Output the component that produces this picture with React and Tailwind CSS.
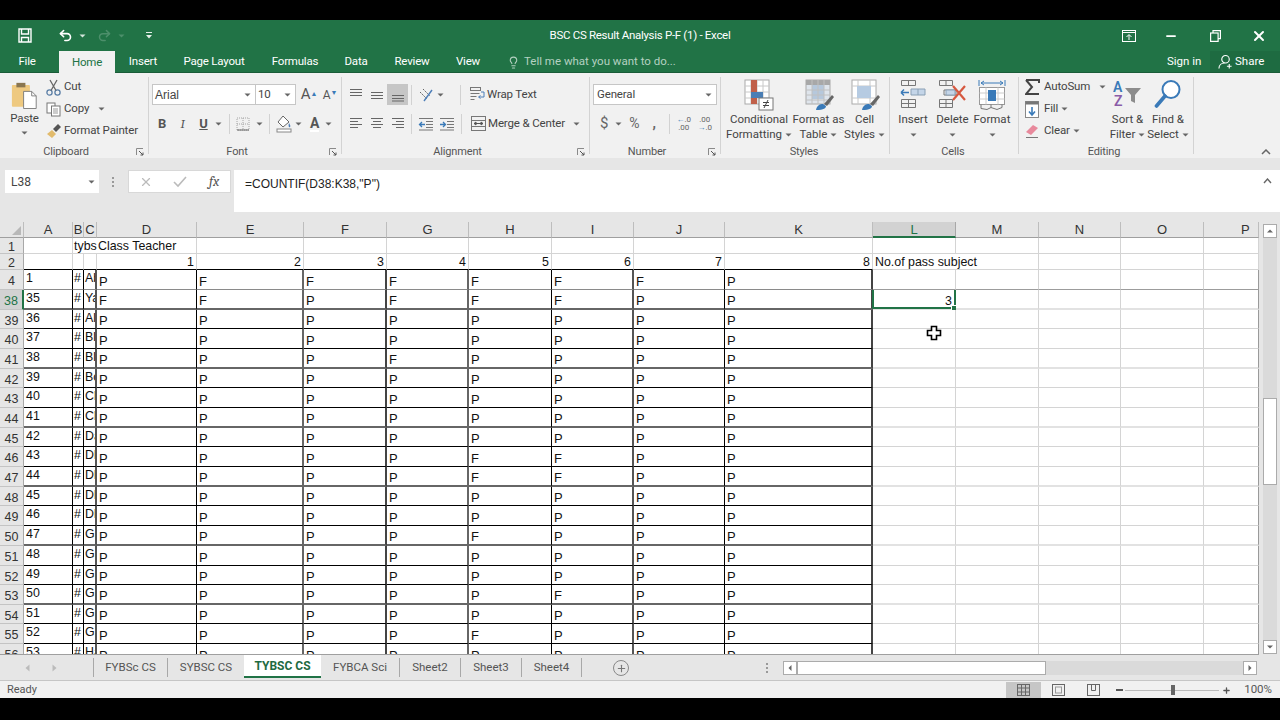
import React from 'react';
import { Undo2, Redo2, Lightbulb, X, Minus, Plus } from 'lucide-react';

const Caret = ({ c = '#666', className = '' }) => (
  <svg width="7" height="4" viewBox="0 0 7 4" className={`shrink-0 ${className}`}><path d="M0.5 0.5h6L3.5 3.5z" fill={c} /></svg>
);
const VSep = ({ className = '' }) => <div className={`w-px h-[20px] bg-[#d2d2d2] shrink-0 ${className}`} />;
const GroupSep = () => <div className="w-px my-[4px] bg-[#d3d3d3] shrink-0" />;
const Launcher = () => (
  <svg width="8" height="8" viewBox="0 0 8 8" className="absolute right-[4px] top-[2px]"><path d="M0.5 7V0.5H7" fill="none" stroke="#8a8a8a" /><path d="M3 3l4 4M7 4.5V7H4.5" fill="none" stroke="#555" /></svg>
);
const Group = ({ w, label, launcher, lp = '', children }) => (
  <div className={`flex flex-col shrink-0 ${w}`}>
    <div className="flex-1 min-h-0">{children}</div>
    <div className={`relative h-[12px] leading-[12px] text-center text-[11px] text-[#555] ${launcher ? 'pr-[16px]' : lp}`}>{label}{launcher && <Launcher />}</div>
  </div>
);

const Lines = ({ rows }) => (
  <svg width="16" height="14" viewBox="0 0 16 14">
    {rows.map(([x1, x2, y], i) => <path key={i} d={`M${x1} ${y}H${x2}`} stroke="#666" strokeWidth="1" />)}
  </svg>
);

const PasteIcon = () => (
  <svg width="27" height="28" viewBox="0 0 30 30">
    <rect x="1" y="4" width="20" height="24" rx="1" fill="#eec980" />
    <rect x="6" y="1.5" width="10" height="5" fill="#8a7650" />
    <path d="M14 11h9l5 5v14H14z" fill="#fff" stroke="#777" />
    <path d="M23 11v5h5" fill="none" stroke="#777" />
  </svg>
);
const Scissors = () => (
  <svg width="15" height="17" viewBox="0 0 15 17" fill="none" stroke="#5a7ea6" strokeWidth="1.3">
    <circle cx="3.5" cy="13.5" r="2.6" /><circle cx="11.5" cy="13.5" r="2.6" />
    <path d="M5 11.5L11 1M10 11.5L4 1" stroke="#666" />
  </svg>
);
const CopyIcon = () => (
  <svg width="15" height="15" viewBox="0 0 15 15" fill="#fff" stroke="#777"><rect x="1" y="1" width="8" height="10" /><rect x="5.5" y="4" width="8.5" height="10" /><path d="M7 7h5M7 9h5M7 11h5" stroke="#999" /></svg>
);
const Painter = () => (
  <svg width="16" height="16" viewBox="0 0 16 16"><path d="M1 11l5-4 4 4-4 4z" fill="#e2bb6c" /><path d="M7 6l5-5 3 3-5 5z" fill="#555" /></svg>
);
const Borders = () => (
  <svg width="14" height="14" viewBox="0 0 14 14" fill="none"><rect x="1" y="1" width="12" height="12" stroke="#a5a5a5" strokeDasharray="1 1" /><path d="M1 7h12M7 1v12" stroke="#a5a5a5" strokeDasharray="1 1" /><path d="M1 13h12" stroke="#666" /></svg>
);
const FillIcon = () => (
  <svg width="16" height="18" viewBox="0 0 16 18" fill="none"><path d="M7 1L2 7l5 5 6-5z" stroke="#666" fill="#fff" /><path d="M13 8c1 2 2 3 1 4s-2-1-1-4z" fill="#4d7eb8" /><rect x="1" y="14" width="14" height="3" fill="#fff" stroke="#888" /></svg>
);
const Orient = () => (
  <svg width="16" height="16" viewBox="0 0 16 16" fill="none"><path d="M2 5l7 7M5 2l7 7" stroke="#666" strokeDasharray="2 1" /><path d="M14 3L6 14" stroke="#4d7eb8" strokeWidth="1.4" /></svg>
);
const WrapIcon = () => (
  <svg width="17" height="17" viewBox="0 0 17 17" fill="none" stroke="#777"><rect x="1.5" y="1.5" width="10" height="3" /><path d="M1.5 7.5h9M1.5 10.5h6M1.5 13.5h4" /><path d="M12 6h3v5h-5M11.5 9.5l-2 1.5 2 1.5" stroke="#4d7eb8" /></svg>
);
const MergeIcon = () => (
  <svg width="17" height="17" viewBox="0 0 17 17" fill="none" stroke="#777"><rect x="1.5" y="1.5" width="14" height="14" /><path d="M1.5 5.5h14M1.5 11.5h14" /><path d="M4 8.5h9M4 8.5l2-1.5v3zM13 8.5l-2-1.5v3z" stroke="#555" /></svg>
);
const Indent = ({ flip }) => (
  <svg width="16" height="14" viewBox="0 0 16 14" fill="none"><path d="M1 1.5h14M8 4.5h7M8 7.5h7M8 10.5h7M1 13h14" stroke="#777" /><path d={flip ? 'M1 7.5h5M4 5l2.5 2.5L4 10' : 'M7 7.5H2M4 5L1.5 7.5 4 10'} stroke="#3a7ab8" strokeWidth="1.3" /></svg>
);
const CondIcon = () => (
  <svg width="30" height="32" viewBox="0 0 30 32">
    <rect x="1" y="1" width="24" height="24" fill="#fff" stroke="#aaa" />
    <path d="M1 7h24M1 13h24M1 19h24M7 1v24M13 1v24M19 1v24" stroke="#c8c8c8" />
    <rect x="7" y="1" width="6" height="6" fill="#c0604a" /><rect x="7" y="7" width="6" height="6" fill="#c0604a" />
    <rect x="7" y="13" width="12" height="6" fill="#4a7eb5" /><rect x="7" y="19" width="6" height="6" fill="#c0604a" />
    <rect x="15" y="19" width="14" height="12" fill="#fff" stroke="#777" />
    <path d="M19 23.5h6M19 26.5h6M24 21l-4 8" stroke="#444" fill="none" />
  </svg>
);
const Brush = () => (
  <g><path d="M20 25l8-9 2 2-7 9z" fill="#666" /><path d="M12 31c1-5 4-6 7-6l3 2c0 2-2 4-10 4z" fill="#3a7ab8" /></g>
);
const TableIcon = () => (
  <svg width="30" height="32" viewBox="0 0 30 32">
    <rect x="2" y="1" width="24" height="24" fill="#dfe5ec" stroke="#aaa" />
    <rect x="2" y="1" width="24" height="5" fill="#a8a8a8" />
    <rect x="8" y="6" width="12" height="14" fill="#b6c8dc" />
    <path d="M2 11h24M2 16h24M2 21h24M8 1v24M14 1v24M20 1v24" stroke="#c0c0c0" />
    <Brush />
  </svg>
);
const CellStyleIcon = () => (
  <svg width="30" height="32" viewBox="0 0 30 32">
    <rect x="2" y="1" width="24" height="24" fill="#fff" stroke="#aaa" />
    <path d="M2 7h24M2 19h24M8 1v24M20 1v24" stroke="#c8c8c8" />
    <rect x="7" y="7" width="14" height="12" fill="#b6cbe2" />
    <Brush />
  </svg>
);
const InsertIcon = () => (
  <svg width="26" height="30" viewBox="0 0 26 30" fill="none">
    <path d="M1.5 1.5h14v5h-14zM8.5 1.5v5M1.5 20.5h14v8h-14zM1.5 24.5h14M8.5 20.5v8" stroke="#777" />
    <path d="M1 13.5h8M1 13.5l3-3M1 13.5l3 3" stroke="#3a7ab8" strokeWidth="1.5" />
    <path d="M11 10h14v6H11z" fill="#c4d5e8" stroke="#8aa0b5" /><path d="M18 10v6" stroke="#8aa0b5" />
  </svg>
);
const DeleteIcon = () => (
  <svg width="30" height="30" viewBox="0 0 30 30" fill="none">
    <path d="M1.5 1.5h13v5h-13zM8 1.5v5M1.5 20.5h13v8h-13zM1.5 24.5h13M8 20.5v8M6 11h12v5H6z" stroke="#777" />
    <rect x="8" y="11" width="9" height="5" fill="#c4d5e8" stroke="#8aa0b5" />
    <path d="M15 7l12 14M27 7L15 21" stroke="#d6583f" strokeWidth="2.2" />
  </svg>
);
const FormatIcon = () => (
  <svg width="28" height="32" viewBox="0 0 28 32" fill="none">
    <path d="M1 1v6M27 1v6M3 4h22M3 4l3-2M3 4l3 2M25 4l-3-2M25 4l-3 2" stroke="#3a7ab8" />
    <rect x="1.5" y="8.5" width="25" height="17" stroke="#999" fill="#fff" />
    <path d="M1.5 14h25M1.5 20h25M8 8.5v17M20 8.5v17" stroke="#ccc" />
    <rect x="10" y="11" width="8" height="11" fill="#3a7ab8" />
    <path d="M3 25.5v4l6 1 4-2M13 25.5v3l6 2 5-2v-3" stroke="#777" />
  </svg>
);
const Sigma = () => (
  <svg width="15" height="16" viewBox="0 0 15 16"><path d="M1 1h13v3M14 15H1l6-7-6-7" fill="none" stroke="#444" strokeWidth="2" /></svg>
);
const FillDown = () => (
  <svg width="14" height="17" viewBox="0 0 14 17"><rect x="0.5" y="0.5" width="13" height="16" fill="#fff" stroke="#888" /><rect x="0.5" y="0.5" width="13" height="3" fill="#777" /><path d="M7 6v8M4 10.5L7 14l3-3.5" fill="none" stroke="#3a7ab8" strokeWidth="1.6" /></svg>
);
const Eraser = () => (
  <svg width="15" height="16" viewBox="0 0 15 16"><path d="M1 9l7-7 5 3-7 7z" fill="#e8899c" /><path d="M1 14.5h12" stroke="#777" /></svg>
);
const SortIcon = () => (
  <svg width="30" height="32" viewBox="0 0 30 32">
    <text x="0" y="13" fontSize="14" fontWeight="600" fill="#3a7ab8" fontFamily="Roboto">A</text>
    <text x="1" y="27" fontSize="14" fontWeight="600" fill="#8a5ca8" fontFamily="Roboto">Z</text>
    <path d="M12 9h16l-6 7v8l-4-2v-6z" fill="#8c8c8c" />
  </svg>
);
const FindIcon = () => (
  <svg width="28" height="30" viewBox="0 0 28 30" fill="none"><circle cx="17" cy="10.5" r="8.5" stroke="#3a7ab8" strokeWidth="2" fill="#fff" /><path d="M11 17L2.5 27" stroke="#3a7ab8" strokeWidth="3.6" strokeLinecap="round" /></svg>
);

const Big = ({ w, icon, l1, l2, caret = true }) => (
  <div className={`flex flex-col items-center shrink-0 tracking-normal ${w}`}>
    <div className="h-[39px] pt-[6px] flex justify-center">{icon}</div>
    <div className="h-[15px] leading-[15px] whitespace-nowrap">{l1}</div>
    <div className="h-[15px] leading-[15px] whitespace-nowrap flex items-center justify-center gap-[3px]">{l2}{caret && <Caret />}</div>
  </div>
);

const Ribbon = () => (
  <div className="h-[85px] flex bg-[#f1f1f1] text-[11.5px] tracking-[-0.15px] text-[#444] shrink-0">
    <Group w="w-[148px]" label="Clipboard" launcher>
      <div className="flex">
        <div className="w-[46px] flex flex-col items-center pt-[8px] pl-[3px]">
          <PasteIcon />
          <div className="h-[15px] leading-[15px] mt-[2px]">Paste</div>
          <Caret className="mt-[5px]" />
        </div>
        <div className="flex flex-col pt-[3px]">
          <div className="h-[22px] flex items-center"><div className="w-[18px]"><Scissors /></div>Cut</div>
          <div className="h-[22px] flex items-center"><div className="w-[18px]"><CopyIcon /></div>Copy<Caret className="ml-[9px]" /></div>
          <div className="h-[21px] flex items-center"><div className="w-[18px]"><Painter /></div>Format Painter</div>
        </div>
      </div>
    </Group>
    <GroupSep />
    <Group w="w-[192px]" label="Font" launcher>
      <div className="pt-[11px] pl-[3px]">
        <div className="flex items-center h-[21px]">
          <div className="w-[104px] h-[21px] bg-white border border-[#c6c6c6] flex items-center justify-between pl-[2px] pr-[4px] [font-family:'Liberation_Sans',sans-serif] text-[12px] tracking-normal">Arial<Caret /></div>
          <div className="w-[40px] h-[21px] bg-white border border-l-0 border-[#c6c6c6] flex items-center justify-between pl-[2px] pr-[4px]">10<Caret /></div>
          <div className="ml-[4px] w-[18px] text-[15px] text-center text-[#555]">A<sup className="text-[7px] text-[#3a7ab8]">▲</sup></div>
          <div className="ml-[3px] w-[18px] text-[12px] text-center text-[#555]">A<sup className="text-[7px] text-[#3a7ab8]">▼</sup></div>
        </div>
        <div className="flex items-center h-[21px] mt-[8px] text-[13px] text-[#555]">
          <div className="w-[20px] text-center font-bold">B</div>
          <div className="w-[21px] text-center italic font-serif">I</div>
          <div className="w-[21px] text-center font-bold underline">U</div>
          <Caret className="ml-[1px]" />
          <VSep className="ml-[7px]" />
          <div className="ml-[6px]"><Borders /></div>
          <Caret className="ml-[6px]" />
          <VSep className="ml-[6px]" />
          <div className="ml-[6px]"><FillIcon /></div>
          <Caret className="ml-[3px]" />
          <div className="ml-[8px] font-bold border-b-2 border-white leading-[14px] text-[14px]">A</div>
          <Caret className="ml-[6px]" />
        </div>
      </div>
    </Group>
    <GroupSep />
    <Group w="w-[247px]" label="Alignment" launcher>
      <div className="pt-[11px] pl-[3px]">
        <div className="flex items-center h-[21px]">
          <div className="w-[21px] flex justify-center"><Lines rows={[[2, 14, 1.5], [2, 14, 4.5], [2, 14, 7.5]]} /></div>
          <div className="w-[21px] flex justify-center"><Lines rows={[[2, 14, 4.5], [2, 14, 7.5], [2, 14, 10.5]]} /></div>
          <div className="w-[21px] h-[21px] bg-[#c6c6c6] flex justify-center items-center"><Lines rows={[[2, 14, 7.5], [2, 14, 10.5], [2, 14, 13]]} /></div>
          <VSep className="ml-[3px]" />
          <div className="ml-[6px]"><Orient /></div>
          <Caret className="ml-[3px]" />
          <VSep className="ml-[16px]" />
          <div className="ml-[8px]"><WrapIcon /></div>
          <span className="ml-[1px]">Wrap Text</span>
        </div>
        <div className="flex items-center h-[21px] mt-[8px]">
          <div className="w-[21px] flex justify-center"><Lines rows={[[2, 14, 1.5], [2, 10, 4.5], [2, 14, 7.5], [2, 10, 10.5]]} /></div>
          <div className="w-[21px] flex justify-center"><Lines rows={[[2, 14, 1.5], [4, 12, 4.5], [2, 14, 7.5], [4, 12, 10.5]]} /></div>
          <div className="w-[21px] flex justify-center"><Lines rows={[[2, 14, 1.5], [6, 14, 4.5], [2, 14, 7.5], [6, 14, 10.5]]} /></div>
          <VSep className="ml-[3px]" />
          <div className="ml-[6px]"><Indent /></div>
          <div className="ml-[5px]"><Indent flip /></div>
          <VSep className="ml-[6px]" />
          <div className="ml-[8px]"><MergeIcon /></div>
          <span className="ml-[1px]">Merge &amp; Center</span>
          <Caret className="ml-[8px]" />
        </div>
      </div>
    </Group>
    <GroupSep />
    <Group w="w-[130px]" label="Number" launcher>
      <div className="pt-[11px] pl-[3px]">
        <div className="w-[124px] h-[21px] bg-white border border-[#c6c6c6] flex items-center justify-between pl-[3px] pr-[4px]">General<Caret /></div>
        <div className="flex items-center h-[21px] mt-[8px] text-[#666]">
          <span className="ml-[7px] text-[15px]">$</span>
          <Caret className="ml-[7px]" />
          <span className="ml-[7px] text-[14px]">%</span>
          <span className="ml-[13px] text-[14px] font-bold">,</span>
          <VSep className="ml-[13px]" />
          <div className="ml-[6px] w-[16px] text-[8px] leading-[8px] text-center"><span className="text-[#3a7ab8]">←</span>.0<br />.00</div>
          <div className="ml-[5px] w-[16px] text-[8px] leading-[8px] text-center">.00<br /><span className="text-[#3a7ab8]">→</span>.0</div>
        </div>
      </div>
    </Group>
    <GroupSep />
    <Group w="w-[168px]" label="Styles" lp="pr-[2px]">
      <div className="flex pl-[3px]">
        <Big w="w-[70px]" icon={<CondIcon />} l1="Conditional" l2="Formatting" />
        <Big w="w-[49px]" icon={<TableIcon />} l1="Format as" l2="Table" />
        <Big w="w-[43px]" icon={<CellStyleIcon />} l1="Cell" l2="Styles" />
      </div>
    </Group>
    <GroupSep />
    <Group w="w-[128px]" label="Cells" lp="pr-[2px]">
      <div className="flex pl-[3px]">
        <Big w="w-[40px]" icon={<InsertIcon />} l1="Insert" l2="" />
        <Big w="w-[39px]" icon={<DeleteIcon />} l1="Delete" l2="" />
        <Big w="w-[40px]" icon={<FormatIcon />} l1="Format" l2="" />
      </div>
    </Group>
    <GroupSep />
    <Group w="w-[174px]" label="Editing" lp="pr-[4px]">
      <div className="flex">
        <div className="w-[88px] pt-[3px] pl-[6px] flex flex-col shrink-0">
          <div className="h-[22px] flex items-center"><div className="w-[19px]"><Sigma /></div>AutoSum<Caret className="ml-[9px]" /></div>
          <div className="h-[22px] flex items-center"><div className="w-[19px]"><FillDown /></div>Fill<Caret className="ml-[3px]" /></div>
          <div className="h-[22px] flex items-center"><div className="w-[19px]"><Eraser /></div>Clear<Caret className="ml-[3px]" /></div>
        </div>
        <Big w="w-[41px]" icon={<SortIcon />} l1="Sort &" l2="Filter" />
        <Big w="w-[40px]" icon={<FindIcon />} l1="Find &" l2="Select" />
      </div>
    </Group>
    <GroupSep />
    <div className="flex-1 flex items-end justify-end pr-[9px] pb-[3px]">
      <svg width="10" height="6" viewBox="0 0 10 6"><path d="M1 5l4-4 4 4" fill="none" stroke="#666" strokeWidth="1.5" /></svg>
    </div>
  </div>
);

const TitleBar = () => (
  <div className="h-[31px] grid grid-cols-[1fr_auto_1fr] items-center text-white text-[11.5px] tracking-[-0.3px]">
    <div className="flex items-center">
      <svg width="14" height="15" viewBox="0 0 14 15" fill="none" stroke="#fff" strokeWidth="1.4" className="ml-[18px]"><path d="M1 1h12v13H1z" /><path d="M3.5 1v5h7V1M3.5 14v-4.5h7V14" /></svg>
      <Undo2 size={15} strokeWidth={2.6} className="ml-[26px]" />
      <Caret c="#d5e5dc" className="ml-[6px]" />
      <Redo2 size={15} strokeWidth={2.4} color="#4d8f6b" className="ml-[11px]" />
      <Caret c="#4d8f6b" className="ml-[6px]" />
      <svg width="6" height="7" viewBox="0 0 6 7" className="ml-[21px]"><path d="M0 0.5h6" stroke="#e6f0ea" /><path d="M0 3h6L3 6.5z" fill="#e6f0ea" /></svg>
    </div>
    <div className="w-[184px] text-center whitespace-nowrap">BSC CS Result Analysis P-F (1) - Excel</div>
    <div className="flex items-center justify-end">
      <svg width="14" height="12" viewBox="0 0 14 12" fill="none" stroke="#fff"><rect x="0.5" y="0.5" width="13" height="11" /><path d="M0.5 2.5h13M7 10V5M4.5 7L7 4.5 9.5 7" /></svg>
      <Minus size={14} strokeWidth={3} className="ml-[28px]" />
      <svg width="11" height="12" viewBox="0 0 11 12" fill="none" stroke="#fff" strokeWidth="1.2" className="ml-[32px]"><rect x="0.6" y="3" width="7.5" height="8.4" /><path d="M3 3V0.7h7.4v8H8" /></svg>
      <X size={16} strokeWidth={3} className="ml-[30px] mr-[13px]" />
    </div>
  </div>
);

const tabs = [['File', 'w-[54px] mr-[5px]'], ['Home', 'w-[56px]'], ['Insert', 'w-[56px]'], ['Page Layout', 'w-[86px]'], ['Formulas', 'w-[76px]'], ['Data', 'w-[46px]'], ['Review', 'w-[66px]'], ['View', 'w-[46px]']];
const TabRow = () => (
  <div className="h-[22px] flex items-stretch text-white text-[11.5px] border-b border-[#1a5c38]">
    {tabs.map(([t, w]) => (
      <div key={t} className={`${w} flex items-center justify-center pt-[1px] tracking-[-0.2px] ${t === 'Home' ? 'bg-[#f1f1f1] text-[#217346] h-[22px]' : ''}`}>{t}</div>
    ))}
    <div className="flex items-center pt-[1px] text-[#b4d1c1] ml-[16px]"><Lightbulb size={13} className="mr-[4px]" />Tell me what you want to do...</div>
    <div className="ml-auto flex items-center pt-[1px] w-[34px] mr-[9px] whitespace-nowrap">Sign in</div>
    <div className="w-[70px] bg-[#1e6b41] flex items-center pt-[1px] pl-[8px]">
      <svg width="15" height="16" viewBox="0 0 16 16" fill="none" stroke="#fff" strokeWidth="1.2" className="mr-[2px]"><circle cx="8" cy="5" r="4" /><path d="M1 15c0-4 3-6 6-6M12 10v5M9.5 12.5h5" /></svg>
      Share
    </div>
  </div>
);

const FormulaBar = () => (
  <div className="h-[64px] bg-[#e6e6e6] flex items-start pt-[12px] text-[12px] text-[#444] shrink-0">
    <div className="ml-[5px] w-[94px] h-[23px] bg-white flex items-center justify-between pl-[6px] pr-[4px]">L38<Caret /></div>
    <div className="ml-[13px] w-[3px] h-[10px] mt-[7px] border-l-2 border-dotted border-[#999]" />
    <div className="ml-[13px] w-[103px] h-[23px] bg-white border border-[#d8d8d8] flex items-center text-[#bbb]">
      <X size={14} className="ml-[10px]" />
      <svg width="14" height="12" viewBox="0 0 14 12" fill="none" stroke="#bbb" strokeWidth="1.6" className="ml-[20px]"><path d="M1 6l4 4 8-9" /></svg>
      <span className="ml-[22px] italic font-serif text-[14px] text-[#555]">fx</span>
    </div>
    <div className="ml-[3px] flex-1 h-[42px] bg-white flex pl-[11px] pt-[5px] [font-family:'Liberation_Sans',sans-serif] text-[12px] text-[#222] relative">
      =COUNTIF(D38:K38,"P")
      <svg width="9" height="6" viewBox="0 0 9 6" className="absolute right-[8px] top-[8px]"><path d="M1 5l3.5-4L8 5" fill="none" stroke="#666" strokeWidth="1.4" /></svg>
    </div>
  </div>
);

const colLetters = ['A', 'B', 'C', 'D', 'E', 'F', 'G', 'H', 'I', 'J', 'K', 'L', 'M', 'N', 'O', 'P'];
const vBorder = {
  A: 'border-r border-r-black', B: 'border-r border-r-black', C: 'border-r-2 border-r-[#555]', D: 'border-r border-r-black',
  E: 'border-r-2 border-r-[#666]', F: 'border-r-2 border-r-[#444]', G: 'border-r-2 border-r-[#666]', H: 'border-r border-r-black',
  I: 'border-r-2 border-r-[#555]', J: 'border-r border-r-black', K: 'border-r-2 border-r-[#444]',
  L: 'border-r border-r-[#d4d4d4]', M: 'border-r border-r-[#d4d4d4]', N: 'border-r border-r-[#d4d4d4]', O: 'border-r border-r-[#d4d4d4]', P: 'border-r border-r-[#9a9a9a]',
};
const names = ['Ab', 'Ya', 'Al', 'Bl', 'Bl', 'Bo', 'Cl', 'Cl', 'Da', 'Dl', 'Dl', 'Dl', 'Dl', 'Ga', 'Ga', 'Ga', 'Gh', 'Gh', 'Gh', 'Ha'];
const rowNums = [4, 38, 39, 40, 41, 42, 43, 44, 45, 46, 47, 48, 49, 50, 51, 52, 53, 54, 55, 56];
const marks = {
  4: 'PFFFFFFP', 38: 'FFPFFFPP', 41: 'PPPFPPPP', 46: 'PPPPFFPP', 47: 'PPPPFFPP', 50: 'PPPPFPPP', 53: 'PPPPPFPP', 55: 'PPPPFPPP',
};
const heavy = [38, 41, 44, 47, 50, 53];

const HeadCell = ({ children, sel, last }) => (
  <div className={`flex items-center pt-[1px] text-[13px] border-r ${last ? 'justify-start pl-[37px]' : 'justify-center'} ${sel ? 'bg-[#d2d2d2] text-[#217346] border-r-[#a8a8a8] border-b-2 border-b-[#217346]' : 'bg-[#e6e6e6] text-[#333] border-r-[#bdbdbd] border-b border-b-[#9f9f9f]'}`}>{children}</div>
);
const RowHead = ({ n, sel }) => (
  <div className={`flex items-center justify-center pt-[3px] text-[12.5px] border-b border-b-[#c4c4c4] ${sel ? 'bg-[#d2d2d2] text-[#217346] border-r-2 border-r-[#217346]' : 'bg-[#e6e6e6] text-[#333] border-r border-r-[#a8a8a8]'}`}>{n}</div>
);

const Sheet = () => (
  <div className="relative w-[1259px] h-[433px] overflow-hidden border-b border-[#9f9f9f] bg-white [font-family:'Liberation_Sans',sans-serif] text-[12.4px] text-[#111] leading-[14px]">
    <div className="grid grid-cols-[24px_49px_11px_13px_100px_107px_83px_82px_83px_82px_91px_148px_83px_83px_82px_83px_55px] grid-rows-[16px_16px_16px_20px_20px_19px_20px_20px_19px_20px_20px_19px_20px_20px_19px_20px_20px_20px_19px_20px_19px_20px_20px]">
      <div className="bg-[#e6e6e6] border-r border-r-[#bdbdbd] border-b border-b-[#9f9f9f] flex items-end justify-end pr-[2px] pb-[2px]">
        <svg width="9" height="9" viewBox="0 0 9 9"><path d="M9 0v9H0z" fill="#b8b8b8" /></svg>
      </div>
      {colLetters.map((c) => <HeadCell key={c} sel={c === 'L'} last={c === 'P'}>{c}</HeadCell>)}

      <RowHead n={1} />
      {colLetters.map((c) => (
        <div key={c} className={`border-b border-b-[#d4d4d4] flex items-center whitespace-nowrap pl-[1px] pt-[1px] ${c === 'B' || c === 'C' ? '' : 'border-r border-r-[#d4d4d4]'}`}>
          {c === 'B' && 'tybs'}{c === 'D' && 'Class Teacher'}
        </div>
      ))}
      <RowHead n={2} />
      {colLetters.map((c, i) => {
        const inTable = i < 11;
        return (
          <div key={c} className={`border-b flex items-center whitespace-nowrap pt-[1px] ${inTable ? 'border-b-black' : 'border-b-[#d4d4d4]'} ${c === 'L' ? 'pl-[2px]' : 'justify-end pr-[2px] border-r border-r-[#d4d4d4]'}`}>
            {i >= 3 && i <= 10 && i - 2}
            {c === 'L' && 'No.of pass subject'}
          </div>
        );
      })}

      {rowNums.map((n, ri) => {
        const m = marks[n] || 'PPPPPPPP';
        const hv = heavy.includes(n);
        const tableB = n === 4 ? 'border-b border-b-[#8a8a8a]' : hv ? 'border-b-2 border-b-[#666]' : 'border-b border-b-black';
        const restB = n === 4 ? 'border-b border-b-[#9c9c9c]' : hv ? 'border-b-2 border-b-[#e2e2e2]' : 'border-b border-b-[#d4d4d4]';
        return (
          <React.Fragment key={n}>
            <RowHead n={n} sel={n === 38} />
            <div className={`${vBorder.A} ${tableB} pl-[2px] pt-[1px] overflow-hidden`}>{n === 4 ? 1 : n - 3}</div>
            <div className={`${vBorder.B} ${tableB} pl-[1px] pt-[1px] overflow-hidden`}>#</div>
            <div className={`${vBorder.C} ${tableB} pl-[1px] pt-[1px] overflow-hidden`}>{names[ri]}</div>
            {m.split('').map((v, i) => {
              const c = colLetters[3 + i];
              return <div key={c} className={`${vBorder[c]} ${tableB} flex items-end pl-[2px] text-[13px] overflow-hidden`}>{v}</div>;
            })}
            {['L', 'M', 'N', 'O', 'P'].map((c) => (
              <div key={c} className={`${vBorder[c]} ${restB} relative flex items-end justify-end pr-[3px]`}>
                {c === 'L' && n === 38 && (
                  <>
                    3
                    <div className="absolute -left-[1px] -right-[1px] top-0 -bottom-[1px] border-l-2 border-r-2 border-b-2 border-[#217346]" />
                    <div className="absolute -right-[2px] -bottom-[3px] w-[6px] h-[6px] bg-[#217346] border border-white" />
                  </>
                )}
              </div>
            ))}
          </React.Fragment>
        );
      })}
    </div>
    <svg width="16" height="16" viewBox="0 0 16 16" className="absolute left-[926px] top-[103px]">
      <path d="M5.5 1.5h5v4h4v5h-4v4h-5v-4h-4v-5h4z" fill="#fff" stroke="#000" strokeWidth="1.6" />
    </svg>
  </div>
);

const ScrollBtn = ({ d, className = '' }) => (
  <div className={`w-[14px] h-[14px] bg-white border border-[#ababab] flex items-center justify-center shrink-0 ${className}`}>
    <svg width="8" height="8" viewBox="0 0 8 8"><path d={d} fill="#666" /></svg>
  </div>
);

const VScroll = () => (
  <div className="flex-1 flex flex-col items-center pl-[4px] pr-[3px] pt-[2px] bg-[#e6e6e6]">
    <ScrollBtn d="M1 5.5h6L4 2.5z" />
    <div className="flex-1 w-[14px] bg-[#dadada] flex flex-col pt-[160px]">
      <div className="h-[87px] bg-white border border-[#ababab]" />
    </div>
    <ScrollBtn d="M1 2.5h6L4 5.5z" className="mb-[1px]" />
  </div>
);

const sheetTabs = [['FYBSc CS', 'w-[74px]'], ['SYBSC CS', 'w-[76px]'], ['TYBSC CS', 'w-[77px]'], ['FYBCA Sci', 'w-[79px]'], ['Sheet2', 'w-[61px]'], ['Sheet3', 'w-[61px]'], ['Sheet4', 'w-[60px]']];
const TabsBar = () => (
  <div className="h-[26px] bg-[#e6e6e6] flex text-[11.5px] text-[#555] border-b border-[#c6c6c6] shrink-0">
    <div className="w-[94px] h-[19px] mt-[3px] flex items-center pl-[25px] shrink-0 border-r border-[#a8a8a8]">
      <svg width="5" height="8" viewBox="0 0 5 8"><path d="M4.5 0.5L0.5 4l4 3.5z" fill="#bbb" /></svg>
      <svg width="5" height="8" viewBox="0 0 5 8" className="ml-[22px]"><path d="M0.5 0.5L4.5 4l-4 3.5z" fill="#bbb" /></svg>
    </div>
    {sheetTabs.map(([t, w]) => {
      const active = t === 'TYBSC CS';
      return active ? (
        <div key={t} className={`${w} h-[23px] bg-white border-b-2 border-b-[#217346] text-[12px] font-bold text-[#1e6b41] flex items-center justify-center shrink-0`}>{t}</div>
      ) : (
        <div key={t} className={`${w} h-[19px] mt-[3px] flex items-center justify-center shrink-0 ${t === 'SYBSC CS' ? '' : 'border-r border-[#a8a8a8]'}`}>{t}</div>
      );
    })}
    <div className="ml-[31px] w-[16px] h-[16px] mt-[5px] rounded-full border border-[#888] flex items-center justify-center shrink-0">
      <Plus size={11} strokeWidth={2.4} color="#777" />
    </div>
    <div className="ml-[137px] w-[3px] h-[10px] mt-[8px] border-l-2 border-dotted border-[#999] shrink-0" />
    <div className="ml-[14px] flex mt-[6px] h-[14px] w-[474px] shrink-0 bg-[#dadada]">
      <ScrollBtn d="M5.5 1v6l-3-3z" />
      <div className="w-[249px] h-[14px] bg-white border border-[#ababab]" />
      <div className="flex-1" />
      <ScrollBtn d="M2.5 1v6l3-3z" />
    </div>
  </div>
);

const StatusBar = () => (
  <div className="h-[17px] pt-[1px] bg-[#f1f1f1] flex items-center text-[11px] text-[#555] shrink-0">
    <div className="ml-[7px]">Ready</div>
    <div className="ml-auto w-[35px] h-[16px] bg-[#c6c6c6] flex items-center justify-center">
      <svg width="13" height="12" viewBox="0 0 13 12" fill="none" stroke="#666"><rect x="0.5" y="0.5" width="12" height="11" /><path d="M4.5 0.5v11M8.5 0.5v11M0.5 4h12M0.5 8h12" /></svg>
    </div>
    <svg width="13" height="12" viewBox="0 0 13 12" fill="none" stroke="#666" className="ml-[11px]"><rect x="0.5" y="0.5" width="12" height="11" /><rect x="3.5" y="3" width="6" height="6" stroke="#999" /></svg>
    <svg width="13" height="12" viewBox="0 0 13 12" fill="none" stroke="#666" className="ml-[22px]"><rect x="0.5" y="0.5" width="12" height="11" /><path d="M4.5 0.5v6h4v-6" /></svg>
    <svg width="7" height="3" viewBox="0 0 7 3" className="ml-[16px]"><rect width="7" height="2" fill="#555" /></svg>
    <div className="ml-[2px] w-[94px] h-px bg-[#bbb] relative">
      <div className="absolute left-[46px] -top-[5px] w-[4px] h-[10px] bg-[#666]" />
    </div>
    <Plus size={9} strokeWidth={3.5} color="#555" className="ml-[3px]" />
    <div className="ml-[13px] mr-[8px] text-[11.5px]">100%</div>
  </div>
);

export default function App() {
  return (
    <div className="w-[1280px] h-[720px] bg-black flex flex-col overflow-hidden [font-family:Roboto,sans-serif]">
      <div className="h-[20px] shrink-0" />
      <div className="h-[678px] flex flex-col bg-[#217346] shrink-0">
        <TitleBar />
        <TabRow />
        <Ribbon />
        <FormulaBar />
        <div className="h-[433px] flex shrink-0 bg-[#e6e6e6]">
          <Sheet />
          <VScroll />
        </div>
        <TabsBar />
        <StatusBar />
      </div>
    </div>
  );
}
